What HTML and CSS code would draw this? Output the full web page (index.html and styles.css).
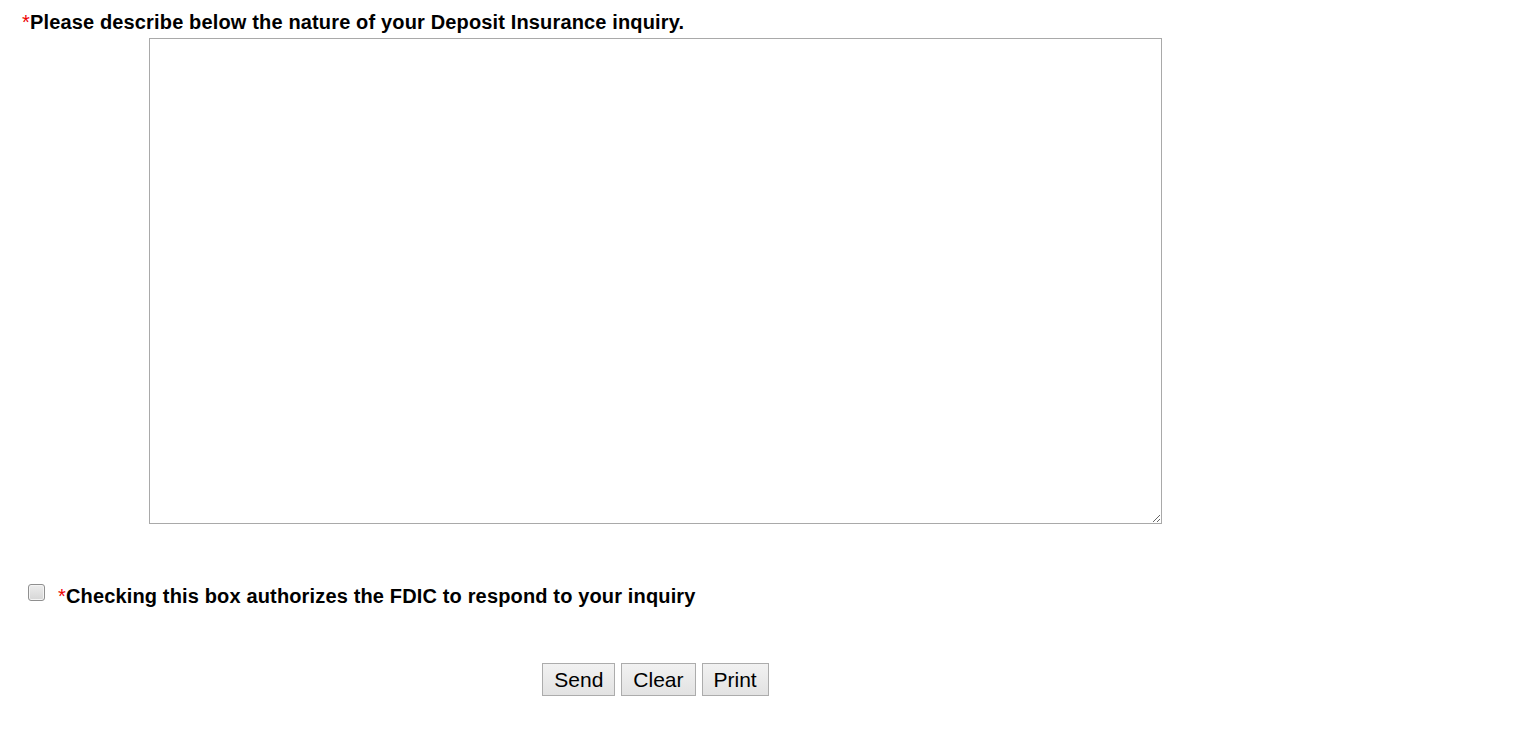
FILE: index.html
```html
<!DOCTYPE html>
<html>
<head>
<meta charset="utf-8">
<link rel="stylesheet" href="styles.css">
</head>
<body>
<form class="form">
  <div class="label"><span class="req">*</span>Please describe below the nature of your Deposit Insurance inquiry.</div>
  <div class="area-row">
    <textarea class="area"></textarea>
  </div>
  <div class="check-row">
    <input type="checkbox" class="check">
    <span class="check-label"><span class="req">*</span>Checking this box authorizes the FDIC to respond to your inquiry</span>
  </div>
  <div class="btn-row">
    <button type="button" class="btn">Send</button>
    <button type="button" class="btn">Clear</button>
    <button type="button" class="btn">Print</button>
  </div>
</form>
</body>
</html>
```
FILE: styles.css
```css
html, body {
  margin: 0;
  padding: 0;
  background: #fff;
}
body {
  font-family: "Liberation Sans", Arial, sans-serif;
  color: #000;
}
.form {
  padding: 11px 0 0 22px;
}
.label {
  font-weight: bold;
  font-size: 20px;
  letter-spacing: 0.15px;
  line-height: 23px;
  margin: 0;
}
.req {
  color: #e00;
  font-weight: normal;
}
.area-row {
  padding-left: 127px;
  margin-top: 4px;
}
.area {
  display: block;
  width: 1013px;
  height: 486px;
  box-sizing: border-box;
  border: 1px solid #a9a9a9;
  margin: 0;
  padding: 2px;
  resize: both;
}
.check-row {
  display: flex;
  align-items: center;
  margin-top: 61px;
  padding-left: 6px;
}
.check {
  appearance: none;
  -webkit-appearance: none;
  width: 17px;
  height: 17px;
  margin: 0;
  border: 1px solid #8f8f8f;
  border-radius: 3px;
  background: linear-gradient(#ededed, #d6d6d6);
  box-shadow: inset 0 0 0 1px #f4f4f4;
  position: relative;
  top: -4px;
}
.check-label {
  margin-left: 13px;
  font-weight: bold;
  font-size: 20px;
  letter-spacing: 0.15px;
  line-height: 23px;
}
.btn-row {
  display: flex;
  justify-content: center;
  gap: 6px;
  width: 1013px;
  margin-left: 127px;
  margin-top: 55px;
}
.btn {
  font-family: "Liberation Sans", Arial, sans-serif;
  font-size: 21px;
  height: 33px;
  padding: 0 11px;
  border: 1px solid #acacac;
  border-radius: 0;
  background: linear-gradient(#f2f2f2, #e2e2e2);
  color: #000;
}
```
